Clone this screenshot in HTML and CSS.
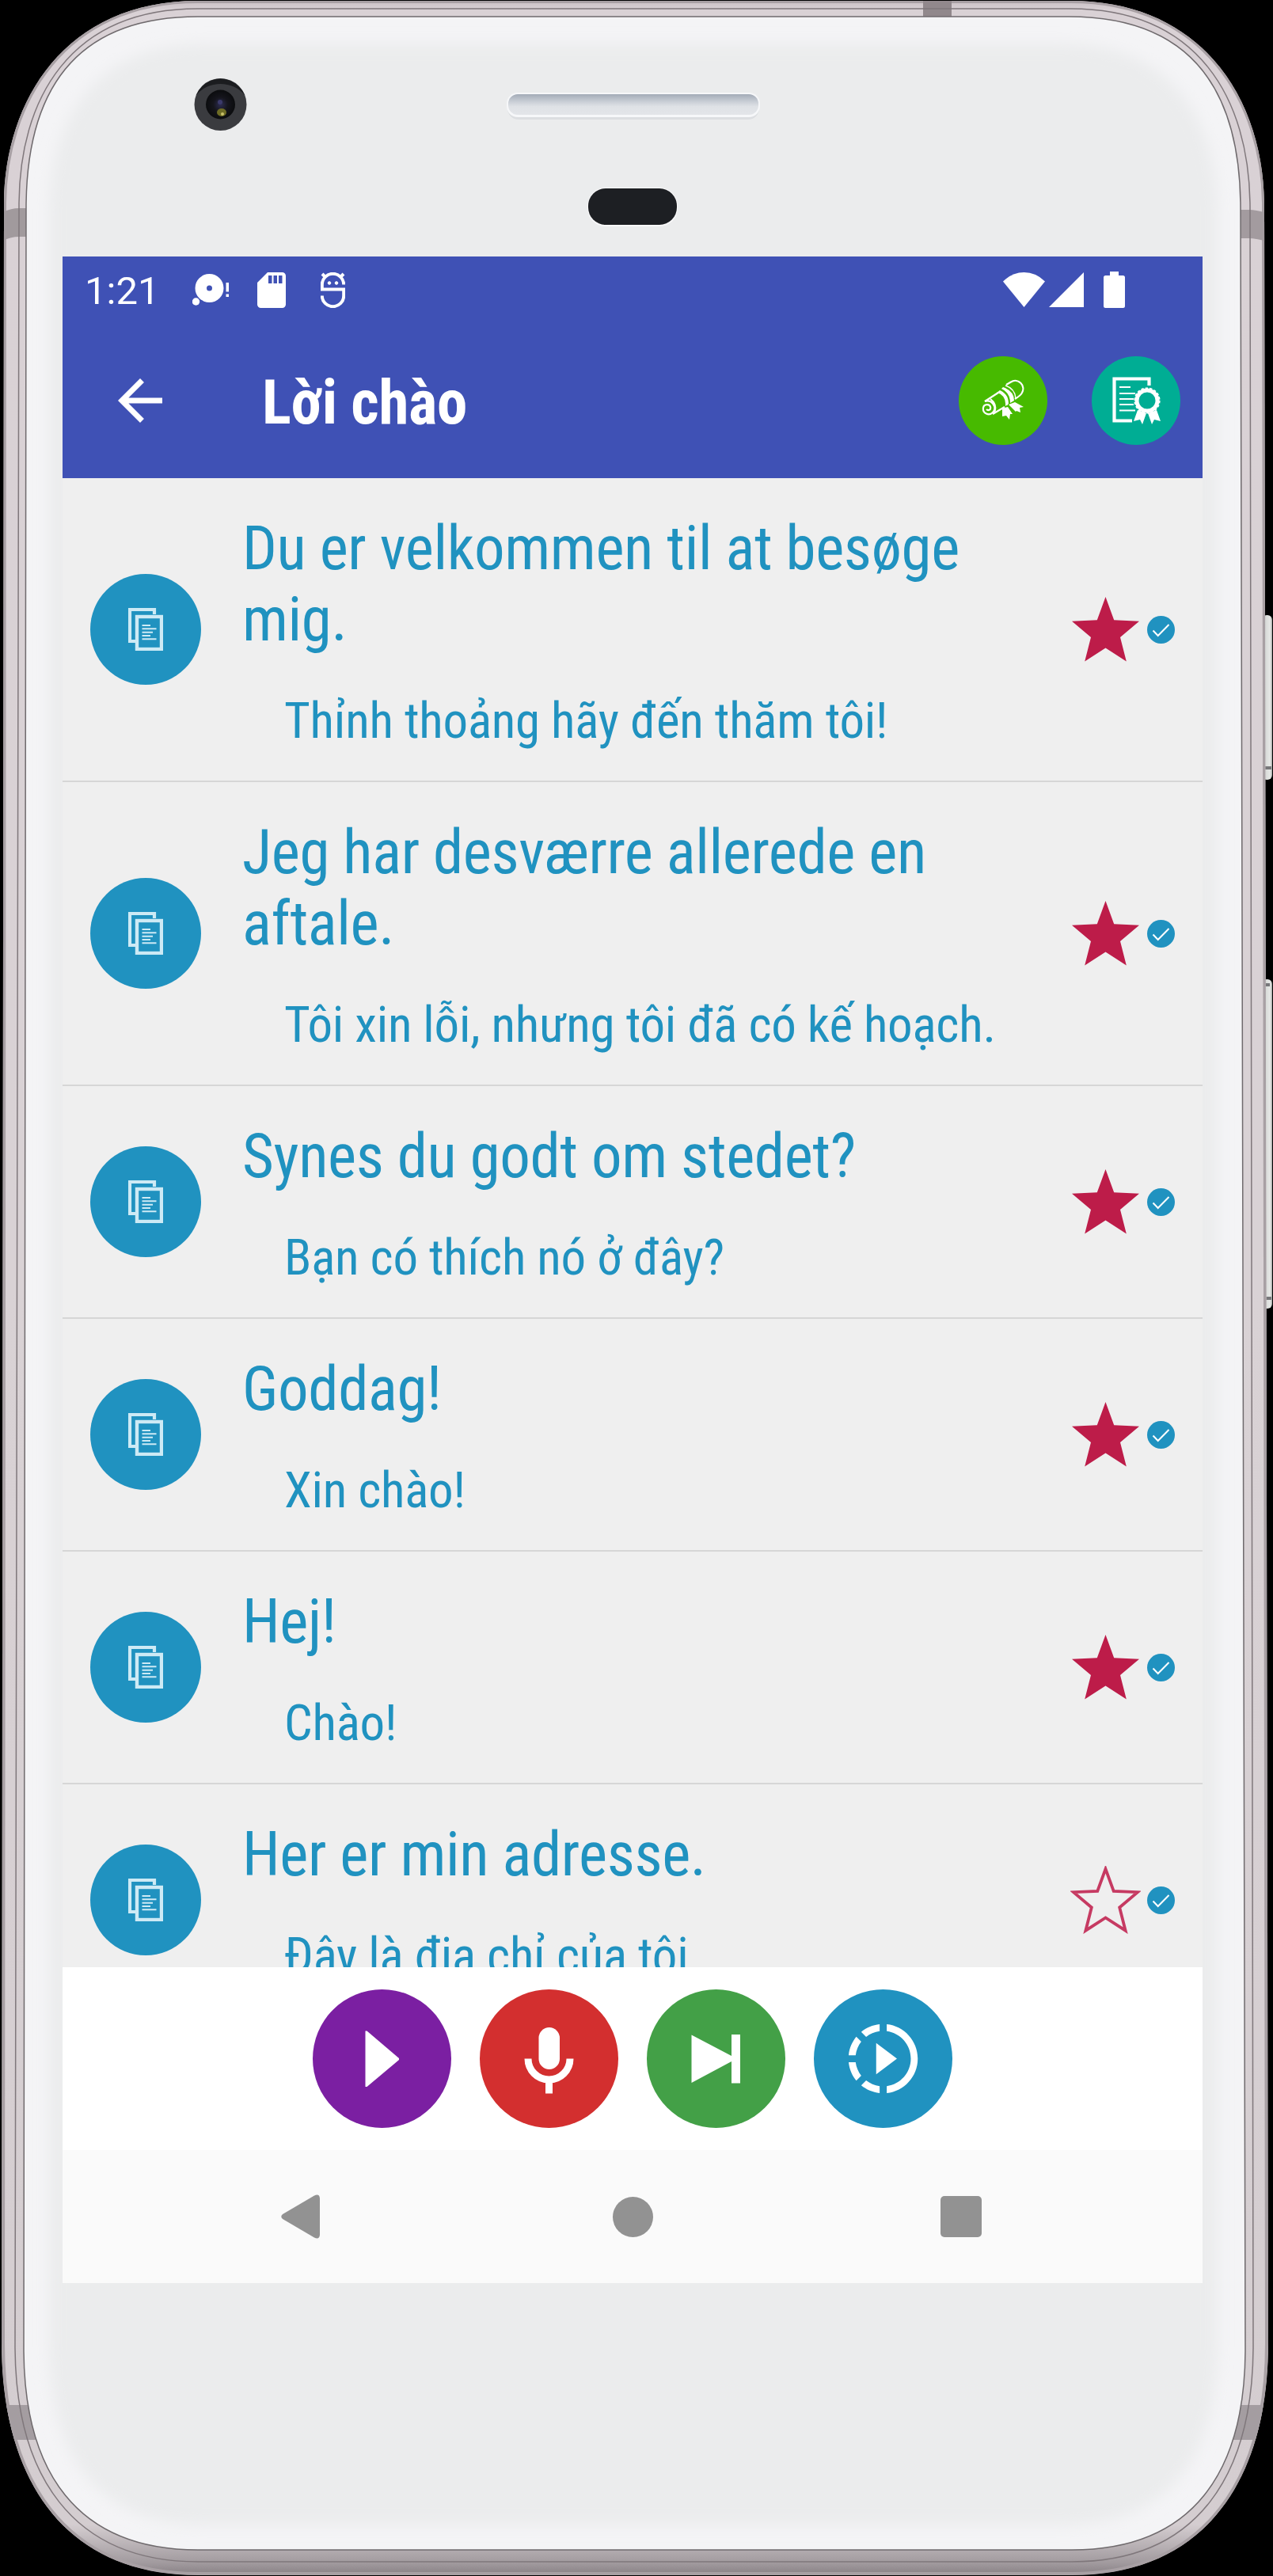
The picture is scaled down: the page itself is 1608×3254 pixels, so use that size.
FILE: index.html
```html
<!DOCTYPE html>
<html lang="vi">
<head>
    <meta charset="UTF-8">
    <meta name="viewport" content="width=device-width, initial-scale=1.0">
    <title>Lời chào</title>
    <link rel="stylesheet" href="styles.css">
</head>
<body>
    <!-- shared icons -->
    <svg class="sprite" aria-hidden="true">
        <symbol id="icon-copy" viewBox="0 0 44 54">
            <path d="M9 42H2V2H33V8" fill="none" stroke="#cdeaf5" stroke-width="4.200"/>
            <rect x="11" y="11" width="31" height="41" fill="none" stroke="#cdeaf5" stroke-width="4.400"/>
            <path d="M17.500 22H28M17.500 26.300H35.500M17.500 30.700H31M17.500 35H28M17.500 39.300H35.500" stroke="#cdeaf5" stroke-width="2"/>
        </symbol>
        <symbol id="icon-star" viewBox="-2 -2 89 86">
            <path d="M42.500 0L53.200 29.300 85 30.700 61 51 68.800 81.500 42.500 64.500 16.200 81.500 24 51 0 30.700 31.800 29.300Z"/>
        </symbol>
        <symbol id="icon-star-border" viewBox="-4 -4 93 90">
            <path d="M42.500 0L53.200 29.300 85 30.700 61 51 68.800 81.500 42.500 64.500 16.200 81.500 24 51 0 30.700 31.800 29.300Z"/>
        </symbol>
        <symbol id="icon-check" viewBox="0 0 35 35">
            <circle cx="17.500" cy="17.500" r="17.500" fill="#2092c0"/>
            <path d="M7.500 18.500L13.700 25 27.500 11" fill="none" stroke="#fff" stroke-width="2"/>
        </symbol>
    </svg>

    <div class="phone">
        <svg class="frame" viewBox="0 0 1608 3254" aria-hidden="true">
            <defs>
                <linearGradient id="metal" x1="0" y1="0" x2="0" y2="1">
                    <stop offset="0" stop-color="#c9c0c4"/>
                    <stop offset="0.004" stop-color="#d9d1d5"/>
                    <stop offset="0.500" stop-color="#d9d2d5"/>
                    <stop offset="0.980" stop-color="#d4cdd0"/>
                    <stop offset="0.995" stop-color="#a19a9e"/>
                    <stop offset="1" stop-color="#857e82"/>
                </linearGradient>
                <linearGradient id="mesh" x1="0" y1="0" x2="0" y2="1">
                    <stop offset="0" stop-color="#a3abb7"/>
                    <stop offset="0.350" stop-color="#c8cdd5"/>
                    <stop offset="0.600" stop-color="#dfe2e6"/>
                    <stop offset="1" stop-color="#e3e5e9"/>
                </linearGradient>
                <linearGradient id="button" x1="0" y1="0" x2="1" y2="0">
                    <stop offset="0" stop-color="#a9a9a8"/>
                    <stop offset="0.400" stop-color="#d9dbd9"/>
                    <stop offset="0.800" stop-color="#e6e8e6"/>
                    <stop offset="1" stop-color="#a5a7a5"/>
                </linearGradient>
                <radialGradient id="lens">
                    <stop offset="0" stop-color="#2d2d52"/>
                    <stop offset="0.500" stop-color="#15151c"/>
                    <stop offset="1" stop-color="#0b0c0e"/>
                </radialGradient>
                <filter id="soft" x="-10%" y="-10%" width="120%" height="120%">
                    <feGaussianBlur stdDeviation="9"/>
                </filter>
                <clipPath id="shell">
                    <path d="M5 260C5 130 80 1 250 1H1352C1522 1 1597 130 1597 260L1602 2960C1602 3130 1524 3253 1354 3253H250C80 3253 2 3130 2 2960Z"/>
                </clipPath>
                <clipPath id="front">
                    <path d="M33 260C34 120 90 21 250 21H1350C1510 21 1566 120 1567 260L1573 2970C1572 3120 1509 3221 1354 3221H250C95 3221 31 3120 30 2970Z"/>
                </clipPath>
            </defs>
            <rect x="1594" y="777" width="13" height="208" rx="6" fill="url(#button)"/>
            <rect x="1594" y="1237" width="13" height="416" rx="6" fill="url(#button)"/>
            <path d="M1597 1244H1604M1597 1640H1606M1597 970H1606" stroke="#77777a" stroke-width="4"/>
            <g clip-path="url(#shell)">
                <rect width="1608" height="3254" fill="url(#metal)"/>
                <path d="M6 260C6 130 81 2 250 2H1352C1521 2 1596 130 1596 260L1600 2960C1600 3130 1524 3251 1354 3251H250C80 3251 4 3130 4 2960Z" fill="none" stroke="#a8a0a4" stroke-width="4"/>
                <rect x="1166" y="0" width="36" height="30" fill="#91888c"/>
                <path d="M0 270Q12 263 24 263H40V299H24Q12 299 0 306Z" fill="#a19a9d"/>
                <path d="M1608 272Q1590 265 1578 265H1560V301H1578Q1590 301 1608 308Z" fill="#a39b9f"/>
                <rect x="0" y="3038" width="50" height="44" fill="#a49da1"/>
                <rect x="1556" y="3038" width="52" height="44" fill="#a49da1"/>
            </g>
            <path d="M24 260C24 125 88 11 250 11H1352C1514 11 1578 125 1579 260L1583 2966C1582 3125 1514 3236 1354 3236H250C90 3236 20 3125 19 2966Z" fill="none" stroke="#7f777b" stroke-width="1.500"/>
            <path d="M33 260C34 120 90 21 250 21H1350C1510 21 1566 120 1567 260L1573 2970C1572 3120 1509 3221 1354 3221H250C95 3221 31 3120 30 2970Z" fill="#f4f4f6" stroke="#6f6a6d" stroke-width="1.500"/>
            <g clip-path="url(#front)">
                <path d="M62 270C62 150 120 55 260 55H1340C1480 55 1538 150 1538 270V2960C1538 3100 1480 3190 1340 3190H260C120 3190 62 3100 62 2960Z" fill="#ebeced" filter="url(#soft)"/>
            </g>

            <!-- camera -->
            <circle cx="278.500" cy="132" r="33" fill="#3a3b3f"/>
            <path d="M248 120A33 33 0 0 1 309 120A40 40 0 0 0 248 120Z" fill="#1b1c1f"/>
            <circle cx="278.500" cy="132" r="18.500" fill="url(#lens)"/>
            <circle cx="278" cy="129" r="3" fill="#3b3a6b"/>
            <ellipse cx="280" cy="142" rx="6" ry="5" fill="#6e6c25"/>
            <circle cx="281" cy="144" r="2" fill="#c9c26a"/>

            <!-- speaker and sensor -->
            <rect x="641" y="119" width="318" height="32" rx="14" fill="#dcdee1"/>
            <rect x="640" y="117" width="320" height="31" rx="14" fill="#f6f7f9"/>
            <rect x="642" y="119" width="316" height="26" rx="12" fill="url(#mesh)"/>
            <rect x="742" y="237" width="114" height="49" rx="23" fill="#f8f8f9"/>
            <rect x="743" y="238" width="112" height="46" rx="22" fill="#1d1f23"/>
        </svg>

        <div class="screen">
            <div class="status-bar">
                <span class="time">1:21</span>
                <svg class="status-disc" viewBox="0 0 46 40" width="46" height="40" fill="#fff">
                    <path fill-rule="evenodd" d="M21.500 0A18 18 0 1 1 21.500 36A18 18 0 1 1 21.500 0ZM21.500 14.500A3.500 3.500 0 1 0 21.500 21.500A3.500 3.500 0 1 0 21.500 14.500Z"/>
                    <circle cx="4.500" cy="35" r="4.700"/>
                    <path d="M42.500 11H46V22.500H42.500ZM42.500 25.500H46V29H42.500Z"/>
                </svg>
                <svg class="status-sd" viewBox="0 0 36 45" width="36" height="45" fill="#fff">
                    <path fill-rule="evenodd" d="M13 0H31.500A4.500 4.500 0 0 1 36 4.500V40.500A4.500 4.500 0 0 1 31.500 45H4.500A4.500 4.500 0 0 1 0 40.500V13ZM14 4V14H18.500V4ZM20.500 4V14H25V4ZM27 4V14H31.500V4Z"/>
                </svg>
                <svg class="status-debug" viewBox="0 0 31 45" width="31" height="45" fill="none" stroke="#fff" stroke-width="4">
                    <path d="M29.200 15.500A13.700 13.700 0 0 0 1.800 15.500V21.500H29.200V29.500A13.700 13.700 0 0 1 1.800 29.500M6 6L2 2M25 6L29 2"/>
                    <circle cx="11" cy="13.500" r="1.800" stroke-width="1" fill="#fff"/>
                    <circle cx="20" cy="13.500" r="1.800" stroke-width="1" fill="#fff"/>
                </svg>
                <svg class="status-wifi" viewBox="0 0 53 44" width="53" height="44" fill="#fff">
                    <path d="M26.500 44L0 11.500Q11.500 0 26.500 0T53 11.500Z"/>
                </svg>
                <svg class="status-signal" viewBox="0 0 44 44" width="44" height="44" fill="#fff">
                    <path d="M0 44H44V0Z"/>
                </svg>
                <svg class="status-battery" viewBox="0 0 27 46" width="27" height="46" fill="#fff">
                    <path d="M8 0H19V5H24.500A2.500 2.500 0 0 1 27 7.500V43.500A2.500 2.500 0 0 1 24.500 46H2.500A2.500 2.500 0 0 1 0 43.500V7.500A2.500 2.500 0 0 1 2.500 5H8Z"/>
                </svg>
            </div>

            <header class="app-bar">
                <svg class="back" viewBox="4 4 16 16" width="56" height="56">
                    <path d="M20 11H7.830l5.590-5.590L12 4l-8 8 8 8 1.410-1.410L7.830 13H20v-2z" fill="#fff"/>
                </svg>
                <h1 class="bar-title">Lời chào</h1>
                <div class="bar-action green">
                    <svg viewBox="0 0 54 54" width="54" height="54" fill="none" stroke="#fff" stroke-width="2.200">
                        <path d="M4 28L21 17M31 7L37 3.500C46 -2 56 8 51 17Q50 20 42 25M29 35L14 44"/>
                        <path d="M4 28C13 25 20 36 14 42C9 47 1 43 2 36C3 31 10 31 11 35C12 39 8 40 6 38M11 25Q20 32 16 42"/>
                        <path d="M19 17Q31 20 30 34L34 31Q34 19 23 14ZM27 10Q41 15 41 27L36 30Q36 17 25 12Z" fill="#fff" stroke="none"/>
                        <path d="M30 8Q42 12 43 24M22 15.500Q32 20 32 33" stroke-width="1.500"/>
                        <path d="M26 37L33 35 39 44 36 44 35 51 31 46 26 47ZM34 32L42 29 53 35 48 36 49 42 44 40 43 41Z" fill="#fff" stroke="none"/>
                    </svg>
                </div>
                <div class="bar-action teal">
                    <svg viewBox="0 0 62 62" width="62" height="62" fill="none" stroke="#fff">
                        <path d="M47.500 12V3.500H3.500V56.500H26" stroke-width="4.200"/>
                        <path d="M10 14H24M10 22H30M10 29H28M10 36H28M10 43.500H30" stroke-width="2.200"/>
                        <circle cx="45" cy="31" r="13" stroke-width="5"/>
                        <circle cx="45" cy="31" r="15.600" stroke-width="2" stroke-dasharray="3.300 2.145"/>
                        <path d="M33 43L44 47 39 61 36 55 28 57ZM57 43L46 47 51 61 54 55 62 57Z" fill="#fff" stroke="none"/>
                    </svg>
                </div>
            </header>

            <ul class="phrases">
                <li class="phrase">
                    <span class="avatar"><svg class="copy"><use href="#icon-copy"/></svg></span>
                    <div class="text">
                        <p class="source">Du er velkommen til at besøge<br>mig.</p>
                        <p class="target">Thỉnh thoảng hãy đến thăm tôi!</p>
                    </div>
                    <svg class="star"><use href="#icon-star"/></svg>
                    <svg class="check"><use href="#icon-check"/></svg>
                </li>
                <li class="phrase">
                    <span class="avatar"><svg class="copy"><use href="#icon-copy"/></svg></span>
                    <div class="text">
                        <p class="source">Jeg har desværre allerede en<br>aftale.</p>
                        <p class="target">Tôi xin lỗi, nhưng tôi đã có kế hoạch.</p>
                    </div>
                    <svg class="star"><use href="#icon-star"/></svg>
                    <svg class="check"><use href="#icon-check"/></svg>
                </li>
                <li class="phrase">
                    <span class="avatar"><svg class="copy"><use href="#icon-copy"/></svg></span>
                    <div class="text">
                        <p class="source">Synes du godt om stedet?</p>
                        <p class="target">Bạn có thích nó ở đây?</p>
                    </div>
                    <svg class="star"><use href="#icon-star"/></svg>
                    <svg class="check"><use href="#icon-check"/></svg>
                </li>
                <li class="phrase">
                    <span class="avatar"><svg class="copy"><use href="#icon-copy"/></svg></span>
                    <div class="text">
                        <p class="source">Goddag!</p>
                        <p class="target">Xin chào!</p>
                    </div>
                    <svg class="star"><use href="#icon-star"/></svg>
                    <svg class="check"><use href="#icon-check"/></svg>
                </li>
                <li class="phrase">
                    <span class="avatar"><svg class="copy"><use href="#icon-copy"/></svg></span>
                    <div class="text">
                        <p class="source">Hej!</p>
                        <p class="target">Chào!</p>
                    </div>
                    <svg class="star"><use href="#icon-star"/></svg>
                    <svg class="check"><use href="#icon-check"/></svg>
                </li>
                <li class="phrase">
                    <span class="avatar"><svg class="copy"><use href="#icon-copy"/></svg></span>
                    <div class="text">
                        <p class="source">Her er min adresse.</p>
                        <p class="target">Đây là địa chỉ của tôi</p>
                    </div>
                    <svg class="star empty"><use href="#icon-star-border"/></svg>
                    <svg class="check"><use href="#icon-check"/></svg>
                </li>
            </ul>

            <div class="player">
                <div class="control purple">
                    <svg viewBox="0 0 175 175" fill="#fff"><path d="M66.500 52.500H68.500L109 87V89L68.500 123H66.500Z"/></svg>
                </div>
                <div class="control red">
                    <svg viewBox="0 0 175 175" fill="#fff">
                        <rect x="74.500" y="48" width="26.500" height="53" rx="13.250"/>
                        <path d="M61 87.500A26.500 26.500 0 0 0 114 87.500M87.500 114V131.500" fill="none" stroke="#fff" stroke-width="9"/>
                    </svg>
                </div>
                <div class="control leaf">
                    <svg viewBox="0 0 175 175" fill="#fff"><path d="M56.500 57.500L107 84V57H118V118.500H107V91L56.500 118Z"/></svg>
                </div>
                <div class="control blue">
                    <svg viewBox="0 0 24 24" class="slow">
                        <path d="M10 7.500v9L16 12zM11 4.070V2.050c-2.010.2-3.840 1-5.320 2.210L7.100 5.690c1.110-.86 2.440-1.440 3.900-1.620zM5.690 7.100L4.260 5.680C3.050 7.160 2.250 8.990 2.050 11h2.020c.18-1.460.76-2.790 1.620-3.900zM4.070 13H2.050c.2 2.010 1 3.840 2.210 5.320l1.430-1.430c-.86-1.100-1.440-2.430-1.620-3.890zm1.610 6.740C7.160 20.950 9 21.750 11 21.950v-2.020c-1.460-.18-2.790-.76-3.900-1.620l-1.420 1.430zM22 12c0 5.160-3.920 9.420-8.950 9.950v-2.020C16.970 19.410 20 16.050 20 12s-3.030-7.410-6.950-7.930V2.050C18.080 2.580 22 6.840 22 12z" fill="#fff"/>
                    </svg>
                </div>
            </div>

            <div class="nav-bar">
                <svg viewBox="0 0 49 56" width="49" height="56"><path d="M2 25L42 1.500Q48.500 -1.500 49 5V51Q48.500 57.500 42 54.500L2 31Q-1.500 28 2 25Z" fill="#929292"/></svg>
                <span class="nav-home"></span>
                <span class="nav-recent"></span>
            </div>
        </div>
    </div>
</body>
</html>
```
FILE: styles.css
```css
* {
    box-sizing: border-box;
}

body {
    margin: 0;
    background: #000;
    font-family: "Roboto Condensed", Roboto, sans-serif;
    font-stretch: 75%;
}

svg {
    display: block;
    flex-shrink: 0;
}

.sprite {
    position: absolute;
    width: 0;
    height: 0;
}

.phone {
    position: relative;
    width: 1608px;
    height: 3254px;
    padding: 324px 89px 370px 79px;
    overflow: hidden;
}

/* device shell sits behind the screen */
.frame {
    position: absolute;
    inset: 0;
    width: 1608px;
    height: 3254px;
}

.screen {
    position: relative;
    display: flex;
    flex-direction: column;
    width: 1440px;
    height: 2560px;
    background: #efefef;
}

.status-bar {
    display: flex;
    align-items: center;
    height: 84px;
    padding: 0 98px 0 28px;
    background: #3f51b5;
}

.time {
    width: 136px;
    padding-top: 3px;
    color: #fff;
    font-family: Roboto, sans-serif;
    font-stretch: 100%;
    font-size: 49px;
    line-height: 58px;
}

.status-sd {
    margin-left: 36px;
}

.status-debug {
    margin-left: 44px;
}

.status-wifi {
    margin-left: auto;
}

.status-signal {
    margin-left: 5px;
}

.status-battery {
    margin-left: 25px;
}

.app-bar {
    display: flex;
    align-items: center;
    gap: 56px;
    height: 196px;
    padding: 0 28px 0 70px;
    background: #3f51b5;
}

.bar-title {
    flex: 1;
    margin: 0 0 0 70px;
    padding-top: 5px;
    color: #fff;
    font-size: 77px;
    font-weight: 700;
    line-height: 90px;
    letter-spacing: -0.3px;
}

.bar-action {
    display: flex;
    align-items: center;
    justify-content: center;
    width: 112px;
    height: 112px;
    border-radius: 50%;
}

.green {
    background: #47ba00;
}

.teal {
    background: #00ad94;
}

.phrases {
    flex: 1;
    margin: 0;
    padding: 0;
    list-style: none;
    overflow: hidden;
}

.phrase {
    display: flex;
    align-items: center;
    padding: 0 35px;
    border-bottom: 2px solid #d6d6d6;
    color: #2092c0;
}

.avatar {
    display: flex;
    align-items: center;
    justify-content: center;
    flex-shrink: 0;
    width: 140px;
    height: 140px;
    border-radius: 50%;
    background: #2092c0;
}

.copy {
    width: 44px;
    height: 54px;
}

.text {
    flex: 1;
    padding: 44px 0 38px 52px;
    font-weight: 440;
    white-space: nowrap;
}

.source {
    margin: 0;
    font-size: 77px;
    line-height: 90px;
    letter-spacing: -0.4px;
}

.target {
    margin: 46px 0 0;
    padding-left: 53px;
    font-size: 63px;
    line-height: 74px;
    letter-spacing: -0.25px;
}

.star {
    width: 89px;
    height: 86px;
    margin-right: 8px;
    fill: #bd1c49;
}

.star.empty {
    fill: none;
    stroke: #c63a62;
    stroke-width: 4px;
}

.check {
    width: 35px;
    height: 35px;
}

.player {
    display: flex;
    align-items: center;
    justify-content: center;
    gap: 36px;
    height: 231px;
    background: #fff;
}

.control {
    display: flex;
    align-items: center;
    justify-content: center;
    width: 175px;
    height: 175px;
    border-radius: 50%;
}

.control svg {
    width: 175px;
    height: 175px;
}

.control .slow {
    width: 105px;
    height: 105px;
}

.purple {
    background: #7b1fa2;
}

.red {
    background: #d32f2f;
}

.leaf {
    background: #43a047;
}

.blue {
    background: #2092c0;
}

.nav-bar {
    display: flex;
    align-items: center;
    justify-content: space-between;
    height: 168px;
    padding: 0 279px 0 276px;
    background: #fafafa;
}

.nav-home {
    width: 51px;
    height: 51px;
    margin-left: 6px;
    border-radius: 50%;
    background: #929292;
}

.nav-recent {
    width: 52px;
    height: 52px;
    border-radius: 5px;
    background: #929292;
}
```
